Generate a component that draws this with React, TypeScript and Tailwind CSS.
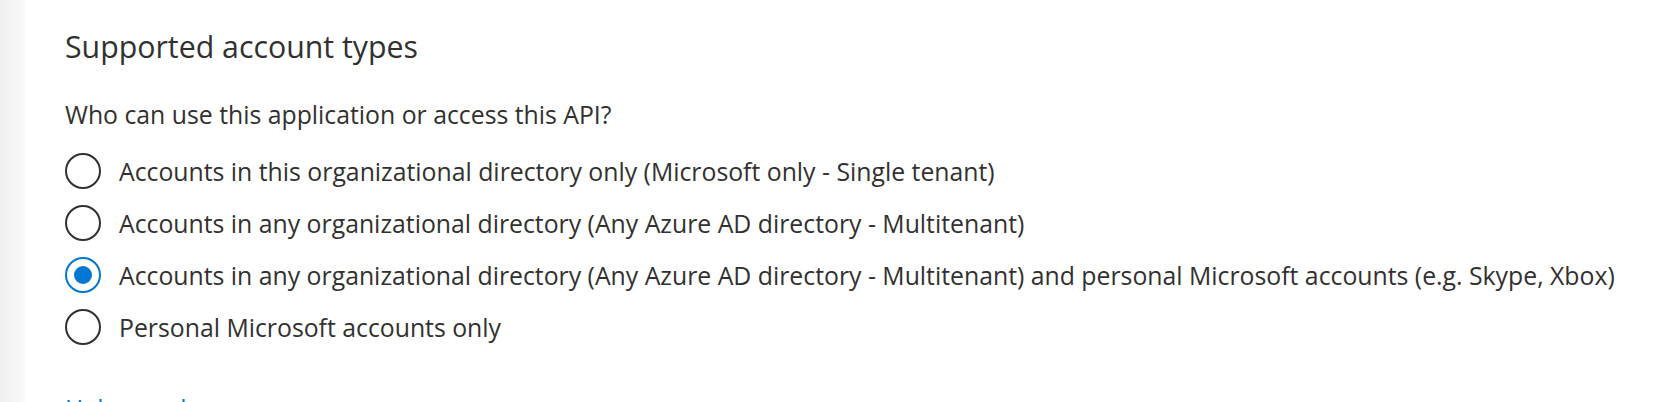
import { useState } from "react";

const OPTIONS = [
  "Accounts in this organizational directory only (Microsoft only - Single tenant)",
  "Accounts in any organizational directory (Any Azure AD directory - Multitenant)",
  "Accounts in any organizational directory (Any Azure AD directory - Multitenant) and personal Microsoft accounts (e.g. Skype, Xbox)",
  "Personal Microsoft accounts only",
];

function Radio({ checked }: { checked: boolean }) {
  return (
    <span
      className={
        checked
          ? "flex h-[36px] w-[36px] shrink-0 items-center justify-center rounded-full border-[2.5px] border-[#0078d4]"
          : "flex h-[36px] w-[36px] shrink-0 items-center justify-center rounded-full border-[2.5px] border-[#323130]"
      }
    >
      {checked ? <span className="h-[18px] w-[18px] rounded-full bg-[#0078d4]" /> : null}
    </span>
  );
}

export default function App() {
  const [selected, setSelected] = useState(2);

  return (
    <div className="flex h-[402px] w-[1670px] overflow-hidden bg-white font-['Open_Sans',sans-serif] text-[#323130]">
      <div className="w-[25px] shrink-0 bg-gradient-to-r from-[#f0f0f0] to-[#f9f9f9]" />
      <div className="flex flex-1 flex-col pl-[40px] pt-[26px]">
        <h2 className="text-[30.3px] leading-[42px] font-normal">Supported account types</h2>
        <p className="mt-[28px] text-[24.8px] leading-[36px]">Who can use this application or access this API?</p>
        <div className="mt-[21px] flex flex-col gap-[16px]">
          {OPTIONS.map((label, i) => (
            <label
              key={label}
              className="flex cursor-pointer items-center gap-[18px] text-[24.8px] leading-[36px]"
              onClick={() => setSelected(i)}
            >
              <Radio checked={selected === i} />
              <span>{label}</span>
            </label>
          ))}
        </div>
        <a href="#" className="mt-[45px] text-[24.8px] leading-[36px] text-[#0078d4]">
          Help me choose...
        </a>
      </div>
    </div>
  );
}
